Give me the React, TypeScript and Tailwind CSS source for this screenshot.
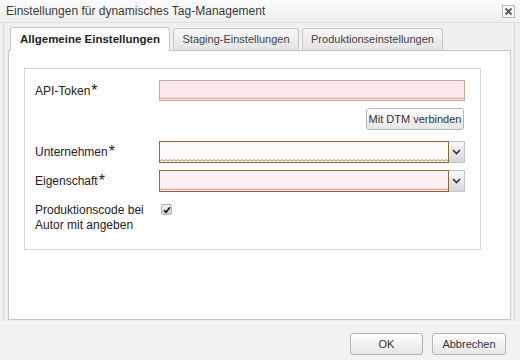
import { useId } from "react"

const Wavy = ({ color }: { color: string }) => {
  const id = useId()
  return (
    <svg className="absolute left-0 right-0 bottom-0 w-full h-[3px]">
      <defs>
        <pattern id={id} width="4" height="3" patternUnits="userSpaceOnUse">
          <path d="M0 2.5 L2 0.5 L4 2.5" stroke={color} strokeWidth="1" fill="none" />
        </pattern>
      </defs>
      <rect width="100%" height="100%" fill={`url(#${id})`} />
    </svg>
  )
}

const Label = ({ text }: { text: string }) => (
  <span className="w-[124px] shrink-0 text-[#222]">
    {text}
    <span className="text-[16px] leading-none relative top-[1px] ml-[1px]">*</span>
  </span>
)

const Select = ({ bg, border, wave }: { bg: string; border: string; wave: string }) => (
  <div className="flex w-[308px] h-[22px]">
    <div className={`relative flex-1 border ${border} ${bg}`}>
      <Wavy color={wave} />
    </div>
    <div className="w-[16px] flex items-center justify-center border border-l-0 border-[#c4c4c4] 
      bg-gradient-to-b from-[#f8f8f8] to-[#d6d6d6]"
    >
      <svg width="9" height="6" viewBox="0 0 9 6">
        <path d="M1 1 L4.5 4.5 L8 1" stroke="#333" strokeWidth="1.6" fill="none" />
      </svg>
    </div>
  </div>
)

const Button = ({ children, w }: { children: string; w: string }) => (
  <button className={`${w} h-[22px] whitespace-nowrap text-[11px] border border-[#b4b4b4] rounded-[3px] text-[#333]
    bg-gradient-to-b from-[#ffffff] to-[#e6e6e6] shadow-[inset_0_1px_0_#fff]`}
  >
    {children}
  </button>
)

export default function App() {
  return (
    <div className="w-[520px] h-[360px] bg-[#f0f0f0] flex flex-col overflow-hidden
      font-['Liberation_Sans',Arial,sans-serif] text-[12px] text-[#333]"
    >
      {/* title bar */}
      <div className="h-[23px] shrink-0 flex items-center justify-between pl-[6px] pr-[5px]
        bg-gradient-to-b from-[#fbfbfb] to-[#efefef] border-b border-[#dedede]"
      >
        <span className="text-[12px] text-[#3a3a3a]">Einstellungen für dynamisches Tag-Management</span>
        <div className="w-[13px] h-[13px] border border-[#b8b8b8] bg-[#f6f6f6] flex items-center justify-center">
          <svg width="9" height="9" viewBox="0 0 9 9">
            <path d="M1.5 1.5 L7.5 7.5 M7.5 1.5 L1.5 7.5" stroke="#555" strokeWidth="1.8" />
          </svg>
        </div>
      </div>

      {/* tabs + panel */}
      <div className="ml-[3px] mr-[5px] pl-[4px] pr-[3px] border-l border-r border-[#dcdcdc] flex flex-col pt-[4px]">
        <div className="flex items-end gap-[3px] ml-[2px] h-[23px]">
          <div className="relative z-10 -mb-px w-[160px] h-[24px] flex items-center justify-center
            bg-white border border-b-0 border-[#c6c6c6] rounded-t-[3px] font-bold text-[11.5px] text-[#222]"
          >
            Allgemeine Einstellungen
          </div>
          <div className="w-[126px] h-[22px] flex items-center justify-center border border-b-0 border-[#c6c6c6]
            rounded-t-[3px] bg-gradient-to-b from-[#f7f7f7] to-[#e4e4e4] text-[11px] text-[#444]"
          >
            Staging-Einstellungen
          </div>
          <div className="w-[141px] h-[22px] flex items-center justify-center border border-b-0 border-[#c6c6c6]
            rounded-t-[3px] bg-gradient-to-b from-[#f7f7f7] to-[#e4e4e4] text-[11px] text-[#444]"
          >
            Produktionseinstellungen
          </div>
        </div>

        <div className="h-[270px] bg-white border border-[#c6c6c6] pt-[17px] pl-[15px] pr-[29px]">
          <div className="h-[182px] border border-[#d6d6d6] pl-[10px] pr-[15px] flex flex-col">
            <div className="flex items-center mt-[11px]">
              <Label text="API-Token" />
              <div className="relative w-[306px] h-[21px] border border-[#d4a894] bg-[#fde9e9]">
                <Wavy color="#d88a84" />
              </div>
            </div>

            <div className="flex justify-end mt-[7px] pr-[1px]">
              <Button w="w-[98px]">Mit DTM verbinden</Button>
            </div>

            <div className="flex items-center mt-[11px]">
              <Label text="Unternehmen" />
              <Select bg="bg-[#fffafa]" border="border-[#8a6d35]" wave="#9c7a3c" />
            </div>

            <div className="flex items-center mt-[7px]">
              <Label text="Eigenschaft" />
              <Select bg="bg-[#fff0f4]" border="border-[#8a6d35]" wave="#c9746c" />
            </div>

            <div className="flex items-start mt-[11px]">
              <span className="w-[124px] shrink-0 leading-[15px] text-[#222]">
                Produktionscode bei Autor mit angeben
              </span>
              <div className="mt-[1px] ml-[2px] w-[11px] h-[11px] rounded-[2px] border border-[#b0b0b0]
                bg-gradient-to-b from-[#f0f0f0] to-[#d4d4d4] flex items-center justify-center"
              >
                <svg width="8" height="8" viewBox="0 0 8 8">
                  <path d="M1 4.2 L3 6.3 L7 1.3" stroke="#111" strokeWidth="1.6" fill="none" />
                </svg>
              </div>
            </div>
          </div>
        </div>
      </div>

      {/* footer */}
      <div className="flex-1 mt-[2px] border-t border-[#fafafa] bg-[#f2f2f2] flex justify-end items-start
        gap-[9px] pt-[10px] pr-[14px]"
      >
        <Button w="w-[73px]">OK</Button>
        <Button w="w-[74px]">Abbrechen</Button>
      </div>
    </div>
  )
}
